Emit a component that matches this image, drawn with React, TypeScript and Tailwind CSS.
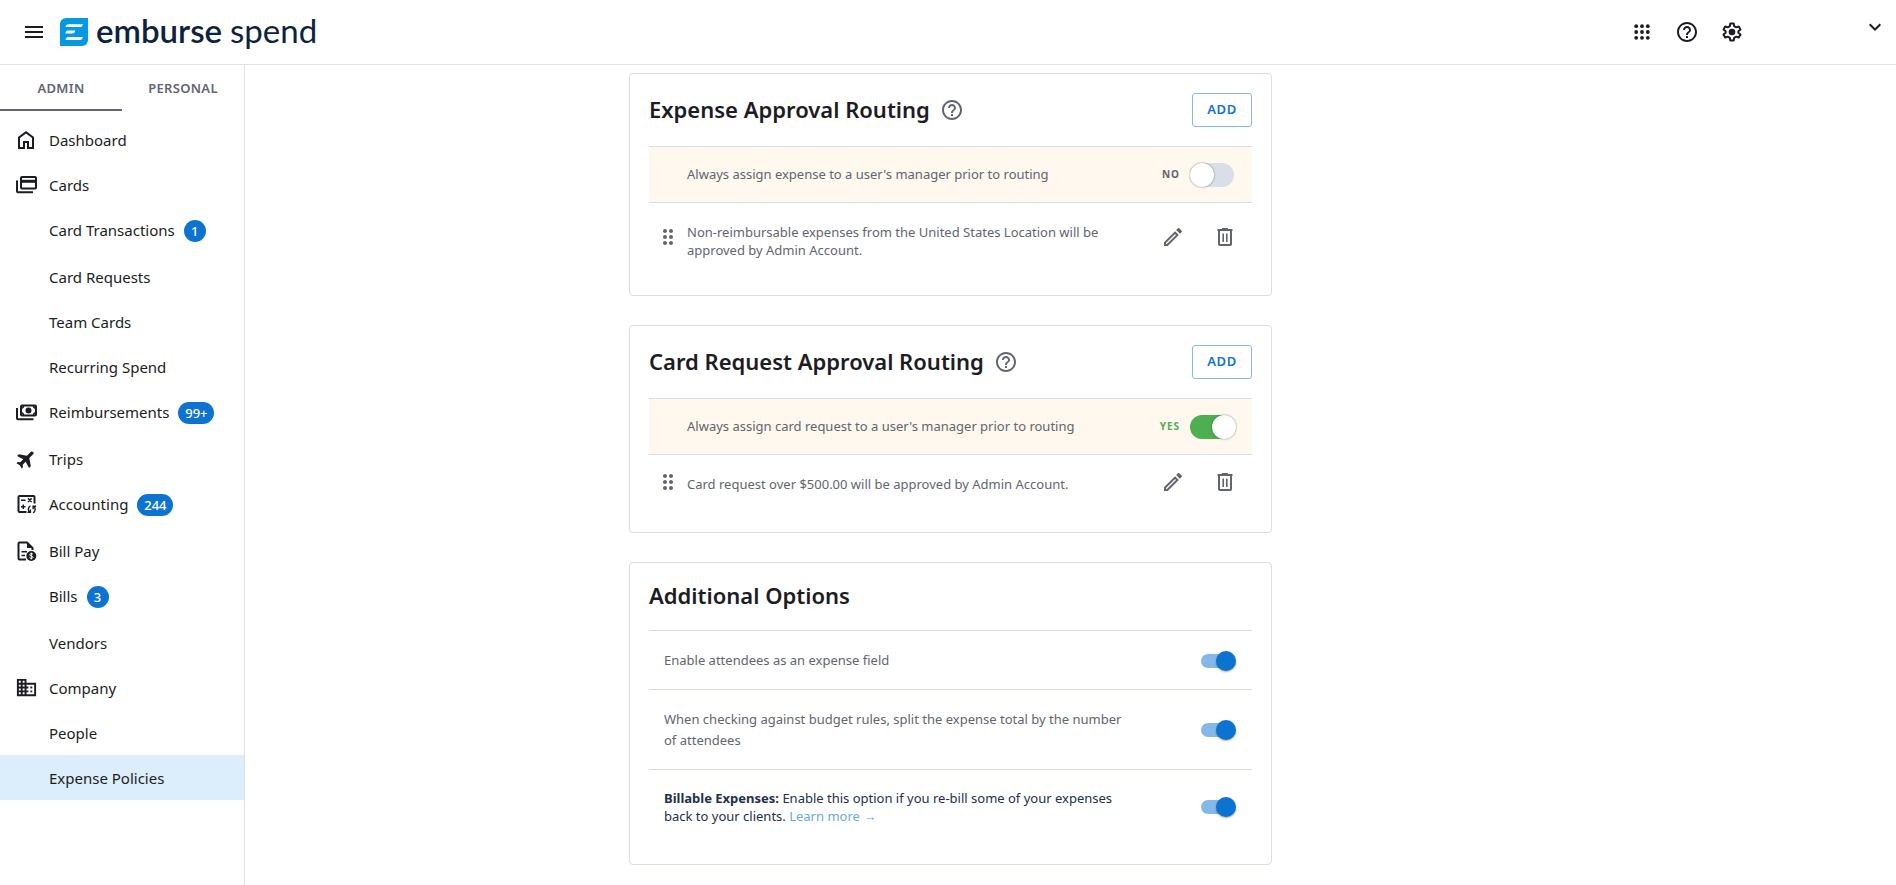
import React, { useState } from "react";
import {
  MdBusiness,
  MdDragIndicator,
  MdHelpOutline,
  MdKeyboardArrowDown,
  MdMenu,
  MdOutlineEdit,
} from "react-icons/md";

function AppsIcon() {
  const steps = [6.2, 12, 17.8];
  return (
    <svg viewBox="0 0 24 24" className="size-6" fill="currentColor" aria-hidden="true">
      {steps.map((y) => steps.map((x) => <circle key={`${x}-${y}`} cx={x} cy={y} r="1.9" />))}
    </svg>
  );
}

function HomeIcon() {
  return (
    <svg viewBox="0 0 24 24" className="size-6" fill="currentColor" aria-hidden="true">
      <path d="M6 19h3v-6h6v6h3v-9l-6-4.5L6 10v9Zm-2 2V9l8-6 8 6v12h-7v-6h-2v6H4Z" />
    </svg>
  );
}

function CardsIcon() {
  return (
    <svg viewBox="0 0 24 24" className="size-6" fill="none" stroke="currentColor" strokeWidth="2" aria-hidden="true">
      <rect x="7" y="4" width="15" height="11.5" rx="1" />
      <path d="M7 8.3h15" strokeWidth="3" />
      <path d="M3 7.5v10.7q0 1 1 1H19" />
    </svg>
  );
}

function CashIcon() {
  return (
    <svg viewBox="0 0 24 24" className="size-6" fill="none" stroke="currentColor" strokeWidth="2" aria-hidden="true">
      <rect x="7" y="5.5" width="15" height="10" rx="1" />
      <path d="M3 8v10.2q0 1 1 1H19.5" />
      <circle cx="14.5" cy="10.5" r="3" fill="currentColor" stroke="none" />
      <path d="M7 8.5a3 3 0 0 0 2.5-3M22 8.5a3 3 0 0 1-2.5-3M7 12.5a3 3 0 0 1 2.5 3M22 12.5a3 3 0 0 0-2.5 3" strokeWidth="1.4" />
    </svg>
  );
}

function PlaneIcon() {
  return (
    <svg viewBox="0 0 24 24" className="size-6" fill="currentColor" aria-hidden="true">
      <path
        transform="rotate(45 12 12)"
        d="M20.500 16.200v-2.500L13.700 9V3.700C13.700 2.700 12.950 2 12 2s-1.700.7-1.700 1.700V9l-6.800 4.700v2.500l6.800-2v4.200L8.300 20v1.800L12 20.700l3.700 1.100V20l-2-1.600v-4.200z"
      />
    </svg>
  );
}

function AccountingIcon() {
  return (
    <svg viewBox="0 0 24 24" className="size-6" fill="none" stroke="currentColor" aria-hidden="true">
      <path d="M12.5 20H5.5q-1 0-1-1V5q0-1 1-1h14q1 0 1 1v6.5" strokeWidth="2" />
      <path d="M7 8.2h4.5M14 6.400l3.600 3.600M17.600 6.400 14 10M7 14.700h4.500M9.250 12.500V17" strokeWidth="1.5" />
      <path d="M16.400 13.800c-2.400 1.200-2.800 4.800-.6 6.800M13.400 20.400h3v-3M19.100 20.800c2.400-1.200 2.800-4.800.6-6.800M22.100 14.300h-3v3" strokeWidth="1.4" />
    </svg>
  );
}

function BillIcon() {
  return (
    <svg viewBox="0 0 24 24" className="size-6" fill="none" stroke="currentColor" strokeWidth="2" aria-hidden="true">
      <path d="M12 20.5H5.5q-1 0-1-1v-15q0-1 1-1H13l5.500 5.500v2" />
      <path d="M13 3v6h6z" fill="currentColor" stroke="none" />
      <path d="M7.500 12.700H13M7.500 16.500h3.500" strokeWidth="1.6" />
      <circle cx="17.3" cy="17" r="5" fill="currentColor" stroke="none" />
      <path d="M19 15.400c-.4-.6-1-.8-1.700-.8-1 0-1.600.5-1.600 1.200 0 1.600 3.300.8 3.300 2.400 0 .8-.7 1.200-1.700 1.200-.8 0-1.400-.3-1.800-.9M17.300 13.600v6.800" stroke="#fff" strokeWidth="1" />
    </svg>
  );
}

function CompanyIcon() {
  return (
    <span className="flex size-6 items-center justify-center">
      <MdBusiness className="size-[23px]" aria-hidden="true" />
    </span>
  );
}

function TrashIcon() {
  return (
    <svg viewBox="0 0 24 24" className="size-6" fill="none" stroke="currentColor" strokeWidth="2" aria-hidden="true">
      <path d="M6 6v13.200q0 .8.8.8h10.400q.8 0 .8-.8V6" />
      <path d="M4.500 5h15" />
      <path d="M9 4h6" />
      <path d="M10.200 8.500V17M13.800 8.500V17" strokeWidth="1.6" />
    </svg>
  );
}

function GearIcon() {
  return (
    <svg viewBox="0 0 24 24" className="size-6" aria-hidden="true">
      <path
        d="M10.300 3.500h3.400l.5 2.700 2 1.150 2.600-.9 1.700 2.950-2.100 1.800v1.600l2.100 1.800-1.700 2.950-2.600-.9-2 1.150-.5 2.700h-3.400l-.5-2.700-2-1.150-2.600.9L3.500 14.600l2.100-1.800v-1.600L3.500 9.400l1.700-2.950 2.600.9 2-1.150z"
        fill="none"
        stroke="currentColor"
        strokeWidth="2"
        strokeLinejoin="round"
      />
      <circle cx="12" cy="12" r="3.3" fill="currentColor" />
    </svg>
  );
}

function Logo() {
  return (
    <a href="#" className="flex items-center text-[#0b2340]">
      <svg viewBox="0 0 28 28" className="mr-2 size-7" aria-hidden="true">
        <path d="M6 0H28V22a6 6 0 0 1-6 6H0V6a6 6 0 0 1 6-6z" fill="#0599e0" />
        <path
          d="M8.500 6.200H22.800q-.4 2.900-3 2.900H5.500q.4-2.900 3-2.900zM8.200 12.600H15.200q-.4 2.900-3 2.900H5.300q.4-2.900 2.900-2.900zM8.500 19H22.800q-.4 2.900-3 2.900H5.500q.4-2.900 3-2.900z"
          fill="#fff"
        />
      </svg>
      <span className="flex items-baseline gap-2 pb-1 font-[Lato,sans-serif] text-[33px] leading-9">
        <span className="font-semibold">emburse</span>
        <span className="font-normal">spend</span>
      </span>
    </a>
  );
}

type NavItem = { label: string; icon?: () => React.ReactElement; badge?: string; active?: boolean };

const navItems: NavItem[] = [
  { label: "Dashboard", icon: HomeIcon },
  { label: "Cards", icon: CardsIcon },
  { label: "Card Transactions", badge: "1" },
  { label: "Card Requests" },
  { label: "Team Cards" },
  { label: "Recurring Spend" },
  { label: "Reimbursements", icon: CashIcon, badge: "99+" },
  { label: "Trips", icon: PlaneIcon },
  { label: "Accounting", icon: AccountingIcon, badge: "244" },
  { label: "Bill Pay", icon: BillIcon },
  { label: "Bills", badge: "3" },
  { label: "Vendors" },
  { label: "Company", icon: CompanyIcon },
  { label: "People" },
  { label: "Expense Policies", active: true },
];

function Header() {
  return (
    <header className="flex h-[65px] shrink-0 items-center border-b border-[#e2e2e3] pr-[9px] pl-[22px] text-[#1b1d22]">
      <button type="button" aria-label="Menu" className="mr-[14px]">
        <MdMenu className="size-6" />
      </button>
      <Logo />
      <div className="ml-auto flex items-center gap-[21px]">
        <button type="button" aria-label="Apps">
          <AppsIcon />
        </button>
        <button type="button" aria-label="Help">
          <MdHelpOutline className="size-6" />
        </button>
        <button type="button" aria-label="Settings">
          <GearIcon />
        </button>
      </div>
      <button type="button" aria-label="Account" className="mb-[10px] ml-[119px]">
        <MdKeyboardArrowDown className="size-6" />
      </button>
    </header>
  );
}

function Sidebar() {
  return (
    <aside className="w-[245px] shrink-0 border-r border-[#e2e2e3]">
      <div role="tablist" className="grid grid-cols-2 text-[13px] font-semibold tracking-wide text-[#62656f]">
        <button type="button" role="tab" aria-selected="true" className="h-[46px] border-b-2 border-[#62656f] pt-[3px]">
          ADMIN
        </button>
        <button type="button" role="tab" aria-selected="false" className="h-[46px] border-b-2 border-transparent pt-[3px]">
          PERSONAL
        </button>
      </div>
      <nav className="pt-[6px]">
        {navItems.map(({ label, icon: Icon, badge, active }) => (
          <a
            key={label}
            href="#"
            className={`flex items-center pl-[14px] text-[15px] leading-[22px] text-[#1b1d22] ${
              badge ? "h-[47px] pb-[2px]" : "h-[45px]"
            } ${active ? "bg-[#dcedfb]" : ""}`}
          >
            <span className="mr-[11px] size-6">{Icon && <Icon />}</span>
            {label}
            {badge && (
              <span
                className={`mt-[2px] ml-[9px] flex h-[22px] items-center justify-center rounded-full bg-[#0d73d1] text-[13px] font-medium text-white ${
                  badge.length > 1 ? "w-9" : "w-[22px]"
                }`}
              >
                {badge}
              </span>
            )}
          </a>
        ))}
      </nav>
    </aside>
  );
}

function Card({ title, action, children }: { title: string; action?: boolean; children: React.ReactNode }) {
  return (
    <section className="rounded-[4px] border border-[#d6dee8] px-[19px]">
      <div className="flex items-center py-[19px]">
        <h2 className="pb-[2px] text-[22px] leading-[27px] font-semibold text-[#1b1d22]">{title}</h2>
        {action && (
          <>
            <button type="button" aria-label={`About ${title}`} className="ml-[10px] text-[#62656f]">
              <MdHelpOutline className="size-6" />
            </button>
            <button
              type="button"
              className="ml-auto h-[34px] w-[60px] rounded-[3px] border border-[#84b8e8] text-[13px] font-semibold tracking-wider text-[#0d73d1]"
            >
              ADD
            </button>
          </>
        )}
      </div>
      {children}
    </section>
  );
}

function ManagerRow({ text, initial }: { text: string; initial: boolean }) {
  const [on, setOn] = useState(initial);
  return (
    <label className="flex h-[57px] items-center border-y border-[#d6dee8] bg-[#fff8ee] pr-[18px] pl-[38px] text-[13px] text-[#62656f]">
      <span className="flex-1">{text}</span>
      <span className={`mr-[10px] text-[10px] font-bold tracking-widest ${on ? "text-[#4caf50]" : "text-[#62656f]"}`}>
        {on ? "YES" : "NO"}
      </span>
      <input
        type="checkbox"
        checked={on}
        onChange={(e) => setOn(e.target.checked)}
        className="flex h-6 w-11 appearance-none items-center rounded-full bg-[#d8dfe8] before:size-6 before:shrink-0 before:rounded-full before:bg-white before:shadow-[0_0_2px_rgba(0,0,0,0.5)] before:content-[''] checked:bg-[#4caf50] checked:before:ml-[22px]"
      />
    </label>
  );
}

function RuleRow({ text }: { text: string }) {
  return (
    <div className="flex items-center pt-3 pr-[15px] pb-9 pl-[7px] text-[#62656f]">
      <MdDragIndicator className="size-6 shrink-0" aria-hidden="true" />
      <p className="mt-2 ml-[7px] max-w-[440px] flex-1 self-start text-[13px] leading-[18px]">{text}</p>
      <div className="ml-auto flex h-[29px] items-center gap-7">
        <button type="button" aria-label="Edit rule">
          <MdOutlineEdit className="size-6" />
        </button>
        <button type="button" aria-label="Delete rule">
          <TrashIcon />
        </button>
      </div>
    </div>
  );
}

function OptionRow({ id, children }: { id: string; children: React.ReactNode }) {
  return (
    <div className="flex items-center justify-between border-t border-[#d6dee8] pt-[19px] pr-[17px] pb-[18px] pl-[15px] text-[13px] leading-[21px] text-[#62656f]">
      <div className="max-w-[470px]">{children}</div>
      <input
        id={id}
        type="checkbox"
        defaultChecked
        className="flex h-[14px] w-[34px] shrink-0 appearance-none items-center rounded-full bg-[#b8bcc4] before:size-5 before:shrink-0 before:rounded-full before:bg-white before:shadow-[0_1px_2px_rgba(0,0,0,0.35)] before:content-[''] checked:bg-[#84b8e8] checked:before:ml-[15px] checked:before:bg-[#0d73d1]"
      />
    </div>
  );
}

export default function App() {
  return (
    <div className="flex min-h-screen flex-col bg-white font-['Noto_Sans',sans-serif]">
      <Header />
      <div className="flex flex-1">
        <Sidebar />
        <main className="grid flex-1 grid-cols-[384fr_643fr_624fr] pt-2 pb-5">
          <div className="col-start-2 flex flex-col gap-[29px]">
            <Card title="Expense Approval Routing" action>
              <ManagerRow text="Always assign expense to a user's manager prior to routing" initial={false} />
              <RuleRow text="Non-reimbursable expenses from the United States Location will be approved by Admin Account." />
            </Card>
            <Card title="Card Request Approval Routing" action>
              <ManagerRow text="Always assign card request to a user's manager prior to routing" initial />
              <RuleRow text="Card request over $500.00 will be approved by Admin Account." />
            </Card>
            <Card title="Additional Options">
              <OptionRow id="attendees">
                <label htmlFor="attendees">Enable attendees as an expense field</label>
              </OptionRow>
              <OptionRow id="split">
                <label htmlFor="split">
                  When checking against budget rules, split the expense total by the number of attendees
                </label>
              </OptionRow>
              <div className="pb-[21px]">
                <OptionRow id="billable">
                  <p className="leading-[18px] text-[#22304a]">
                    <label htmlFor="billable">
                      <strong className="font-bold">Billable Expenses:</strong> Enable this option if you re-bill some of
                      your expenses back to your clients.
                    </label>{" "}
                    <a href="#" className="text-[#6aaae4]">
                      Learn more →
                    </a>
                  </p>
                </OptionRow>
              </div>
            </Card>
          </div>
        </main>
      </div>
    </div>
  );
}
